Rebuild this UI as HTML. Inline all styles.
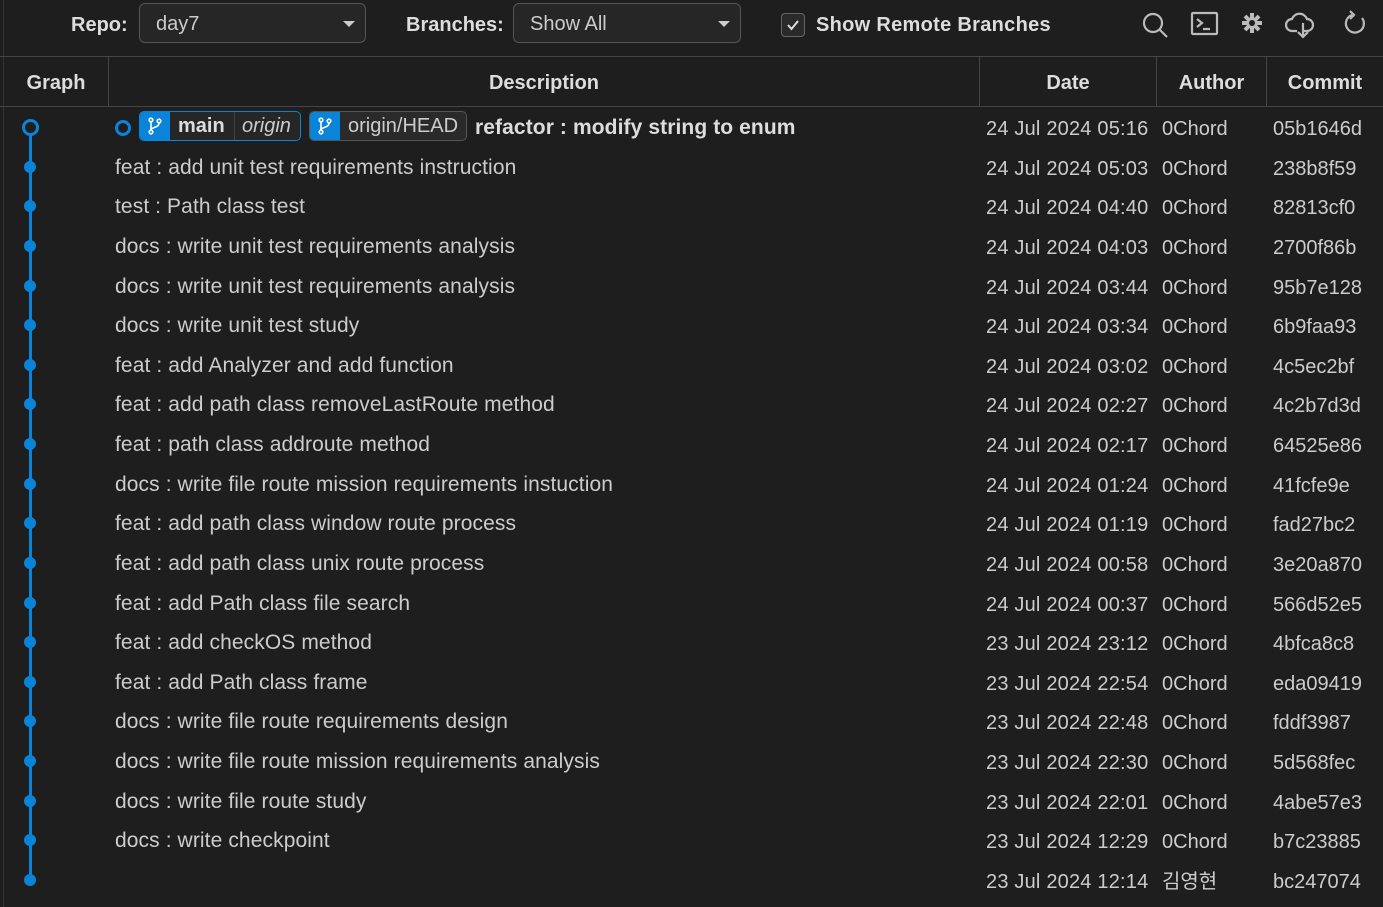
<!DOCTYPE html><html><head><meta charset="utf-8"><style>
body{margin:0;width:1383px;height:907px;background:#1e1e1e;color:#ccc;font-family:"Liberation Sans","Noto Sans CJK KR",sans-serif;overflow:hidden;position:relative}
.a{position:absolute;white-space:nowrap}
.b{font-weight:bold}
.sel{position:absolute;top:3px;height:40px;border:1px solid #555;border-radius:6px;background:#262626;box-sizing:border-box;font-size:20px;line-height:40px;padding-left:16px;color:#ccc}
.sel:after{content:"";position:absolute;right:10px;top:17px;border:6px solid transparent;border-top:6px solid #ccc;border-bottom:0}
.hd{position:absolute;top:57px;height:49px;line-height:52px;font-weight:bold;font-size:20px;text-align:center;border-right:1px solid #444;color:#ddd}
.r{position:absolute;font-size:20px;line-height:24px;color:#ccc}
.ds{font-size:21px;letter-spacing:0.1px}
.dot{position:absolute;left:24px;width:12px;height:12px;border-radius:50%;background:#0a84d8}
</style></head><body>
<div class="a" style="left:3px;top:0;width:1px;height:907px;background:#333"></div>
<div class="a b" style="left:71px;top:14px;font-size:20px;color:#ddd">Repo:</div>
<div class="sel" style="left:139px;width:227px">day7</div>
<div class="a b" style="left:406px;top:14px;font-size:20px;color:#ddd">Branches:</div>
<div class="sel" style="left:513px;width:228px">Show All</div>
<div class="a" style="left:781px;top:13px;width:24px;height:24px;border:1px solid #666;border-radius:4px;box-sizing:border-box;background:#2a2a2a"><svg width="22" height="22" viewBox="0 0 22 22"><path d="M6 11l3.5 4L16 7" stroke="#ddd" stroke-width="2" fill="none"/></svg></div>
<div class="a b" style="left:816px;top:14px;font-size:20px;color:#ddd;letter-spacing:0.3px">Show Remote Branches</div>
<svg class="a" style="left:1140px;top:10px" width="230" height="30" viewBox="0 0 230 30" fill="none" stroke="#bbb" stroke-width="2.2">
<circle cx="13" cy="13" r="9"/><path d="M19.5 19.5L27 27"/>
<rect x="52" y="3" width="25" height="21" rx="1"/><path d="M57 9l5 4-5 4M63 19h7"/>
<circle cx="112" cy="13" r="4.5" fill="#bbb"/><path d="M112 3v20M102 13h20M105 6l14 14M119 6L105 20" stroke-width="4"/><circle cx="112" cy="13" r="3" fill="#1e1e1e" stroke="none"/>
<path d="M157 21h-5a6 6 0 010-12 8 8 0 0115 0 5 5 0 010 12h-4M163 13v14M158 22l5 5 5-5"/>
<path d="M222 8a9 9 0 11-10-3M210 1l4 4-4 4"/>
</svg>
<div class="a" style="left:0;top:56px;width:1383px;height:1px;background:#444"></div>
<div class="a" style="left:0;top:106px;width:1383px;height:1px;background:#444"></div>
<div class="hd" style="left:4px;width:104px">Graph</div>
<div class="hd" style="left:109px;width:870px">Description</div>
<div class="hd" style="left:980px;width:176px">Date</div>
<div class="hd" style="left:1157px;width:109px">Author</div>
<div class="hd" style="left:1267px;width:116px;border:0">Commit</div>
<div class="a" style="left:29px;top:132px;width:3px;height:748px;background:#0a84d8"></div>
<div class="a" style="left:22px;top:119px;width:11px;height:11px;border:3px solid #0a84d8;border-radius:50%;background:#1e1e1e"></div>
<div class="a" style="left:115px;top:120px;width:10px;height:10px;border:3px solid #0a84d8;border-radius:50%"></div>
<div class="a" style="left:139px;top:111px;width:162px;height:30px;border:1px solid #0a84d8;border-radius:5px;box-sizing:border-box;overflow:hidden;background:#262626">
<div class="a" style="left:0;top:0;width:30px;height:30px;background:#0a84d8"></div>
<div class="a b" style="left:38px;top:3px;font-size:20px;color:#ddd">main</div>
<div class="a" style="left:94px;top:0;width:1px;height:30px;background:#444"></div>
<div class="a" style="left:102px;top:3px;font-size:20px;font-style:italic;color:#ccc">origin</div></div>
<div class="a" style="left:309px;top:111px;width:158px;height:30px;border:1px solid #555;border-radius:5px;box-sizing:border-box;overflow:hidden;background:#2a2a2a">
<div class="a" style="left:0;top:0;width:30px;height:30px;background:#0a84d8"></div>
<div class="a" style="left:38px;top:3px;font-size:20px;color:#ccc">origin/HEAD</div></div>
<svg class="a" style="left:145px;top:116px" width="20" height="20" viewBox="0 0 20 20" fill="none" stroke="#fff" stroke-width="1.6"><circle cx="6" cy="4" r="1.8"/><circle cx="6" cy="16" r="1.8"/><circle cx="14" cy="5" r="1.8"/><path d="M6 6v8M14 7c0 5-8 4-8 7"/></svg>
<svg class="a" style="left:315px;top:116px" width="20" height="20" viewBox="0 0 20 20" fill="none" stroke="#fff" stroke-width="1.6"><circle cx="6" cy="4" r="1.8"/><circle cx="6" cy="16" r="1.8"/><circle cx="14" cy="5" r="1.8"/><path d="M6 6v8M14 7c0 5-8 4-8 7"/></svg>
<div class="r b ds" style="left:475px;top:116px;color:#ddd">refactor : modify string to enum</div>
<div id="rows"></div>
<script>
var d=[["","24 Jul 2024 05:16","0Chord","05b1646d"],
["feat : add unit test requirements instruction","24 Jul 2024 05:03","0Chord","238b8f59"],
["test : Path class test","24 Jul 2024 04:40","0Chord","82813cf0"],
["docs : write unit test requirements analysis","24 Jul 2024 04:03","0Chord","2700f86b"],
["docs : write unit test requirements analysis","24 Jul 2024 03:44","0Chord","95b7e128"],
["docs : write unit test study","24 Jul 2024 03:34","0Chord","6b9faa93"],
["feat : add Analyzer and add function","24 Jul 2024 03:02","0Chord","4c5ec2bf"],
["feat : add path class removeLastRoute method","24 Jul 2024 02:27","0Chord","4c2b7d3d"],
["feat : path class addroute method","24 Jul 2024 02:17","0Chord","64525e86"],
["docs : write file route mission requirements instuction","24 Jul 2024 01:24","0Chord","41fcfe9e"],
["feat : add path class window route process","24 Jul 2024 01:19","0Chord","fad27bc2"],
["feat : add path class unix route process","24 Jul 2024 00:58","0Chord","3e20a870"],
["feat : add Path class file search","24 Jul 2024 00:37","0Chord","566d52e5"],
["feat : add checkOS method","23 Jul 2024 23:12","0Chord","4bfca8c8"],
["feat : add Path class frame","23 Jul 2024 22:54","0Chord","eda09419"],
["docs : write file route requirements design","23 Jul 2024 22:48","0Chord","fddf3987"],
["docs : write file route mission requirements analysis","23 Jul 2024 22:30","0Chord","5d568fec"],
["docs : write file route study","23 Jul 2024 22:01","0Chord","4abe57e3"],
["docs : write checkpoint","23 Jul 2024 12:29","0Chord","b7c23885"],
["","23 Jul 2024 12:14","김영현","bc247074"]];
var h="";d.forEach(function(r,i){var y=127+i*39.63;var t=y-10;
if(i>0)h+='<div class="dot" style="top:'+(y-6)+'px"></div>';
if(r[0])h+='<div class="r ds" style="left:115px;top:'+(t-1)+'px">'+r[0]+'</div>';
h+='<div class="r" style="left:986px;top:'+t+'px;letter-spacing:0.2px">'+r[1]+'</div><div class="r" style="left:1162px;top:'+t+'px">'+r[2]+'</div><div class="r" style="left:1273px;top:'+t+'px">'+r[3]+'</div>';});
document.getElementById("rows").innerHTML=h;
</script>
</body></html>
